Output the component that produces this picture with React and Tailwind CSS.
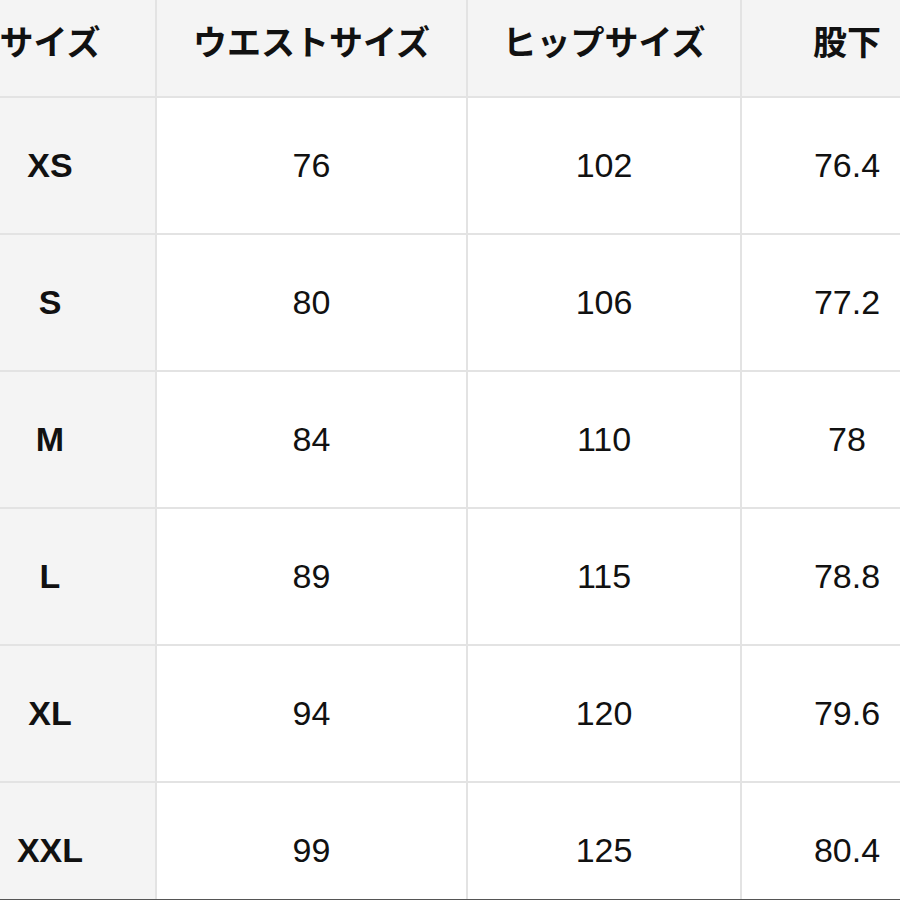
import React from "react";

const headers = ["サイズ", "ウエストサイズ", "ヒップサイズ", "股下"];
const rows = [
  ["XS", "76", "102", "76.4"],
  ["S", "80", "106", "77.2"],
  ["M", "84", "110", "78"],
  ["L", "89", "115", "78.8"],
  ["XL", "94", "120", "79.6"],
  ["XXL", "99", "125", "80.4"],
];

export default function App() {
  return (
    <div className="w-[900px] h-[900px] overflow-hidden bg-white flex flex-col">
      <div className="flex-1 overflow-hidden">
        <div className="ml-[-55px] mt-[-15px] w-[1010px] grid grid-cols-[210px_309px_272px_210px] auto-rows-[135px] grid-rows-[111px] gap-[2px] bg-[#e3e3e3] text-[#111]">
          {headers.map((h) => (
            <div
              key={h}
              className="bg-[#f4f4f4] flex items-center justify-center text-[34px] font-bold leading-none"
              style={{ fontFamily: '"Noto Sans CJK JP", "Noto Sans", sans-serif' }}
            >
              {h}
            </div>
          ))}
          {rows.map((r) =>
            r.map((c, i) => (
              <div
                key={r[0] + i}
                className={
                  i === 0
                    ? "bg-[#f4f4f4] flex items-center justify-center text-[34px] font-bold font-['Liberation_Sans',Arial,sans-serif]"
                    : "bg-white flex items-center justify-center text-[34px] font-['Liberation_Sans',Arial,sans-serif]"
                }
              >
                {c}
              </div>
            ))
          )}
        </div>
      </div>
      <div className="h-[1px] bg-[#555]" />
    </div>
  );
}
